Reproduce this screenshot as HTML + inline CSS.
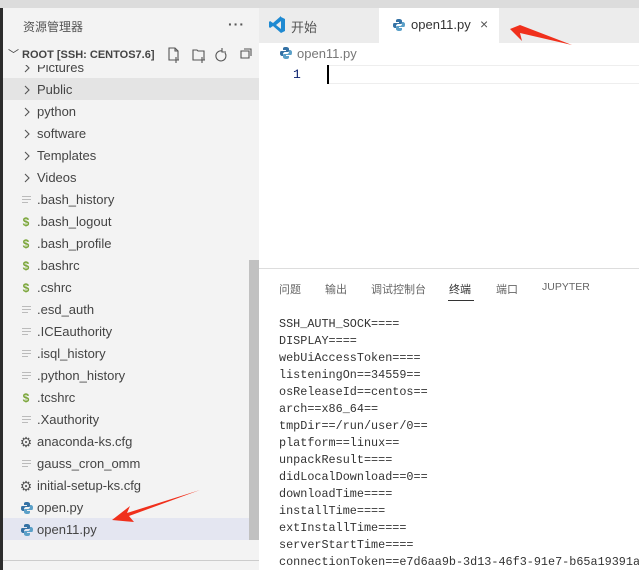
<!DOCTYPE html>
<html><head><meta charset="utf-8"><style>
*{margin:0;padding:0;box-sizing:border-box}
body{width:639px;height:570px;overflow:hidden;background:#fff;font-family:"Liberation Sans","Noto Sans CJK SC",sans-serif;position:relative}
.abs{position:absolute}
.side{left:3px;top:8px;width:256px;height:562px;background:#f3f3f3}
.row{position:absolute;left:0;width:256px;height:22px;font-size:13px;color:#444;line-height:22px;white-space:nowrap}
.row .t{position:absolute;left:34px}
.row .i{position:absolute;left:16px;top:0;width:14px;text-align:center;font-size:12px}
.mono{font-family:"Liberation Mono","DejaVu Sans Mono",monospace;font-size:11.8px;color:#333}
.pt span{position:absolute;white-space:nowrap;top:0}
</style></head><body>
<div class="abs" style="left:0;top:0;width:639px;height:8px;background:#dcdcdc"></div>
<div class="abs" style="left:0;top:8px;width:3px;height:562px;background:#2c2c2c"></div>
<div class="abs side">
 <div class="abs" style="left:20px;top:10px;font-size:12px;color:#555">资源管理器</div>
 <div class="abs" style="left:225px;top:8px;font-size:14px;color:#555;letter-spacing:1px;font-weight:bold">···</div>
 <div class="abs" style="left:0;top:36px;width:256px;height:22px;font-size:11px;font-weight:bold;color:#444;line-height:22px"><span style="margin-left:5px;font-weight:normal">﹀</span> ROOT [SSH: CENTOS7.6]</div>
 <svg class="abs" style="left:163px;top:38px" width="90" height="18" viewBox="0 0 90 18" fill="none" stroke="#555" stroke-width="1.1">
  <path d="M3 2h6l3 3v9H3z M9 2v3h3 M10 11v6 M7 14h6"/>
  <path d="M27 4h4l1 1h6v9H27z M36 11v6 M33 14h6"/>
  <path d="M56 5a5 5 0 1 0 3 2 M56 2v4h4"/>
  <path d="M75 5h8v7h-8z M78 3h7v7"/>
 </svg>
 <div class="abs" style="left:0;top:70px;width:256px;height:22px;background:#e4e4e4"></div>
 <div class="abs" style="left:0;top:510px;width:256px;height:22px;background:#e4e6f1"></div>
 <div class="abs" style="left:246px;top:252px;width:10px;height:280px;background:#c1c1c1"></div>
 <div class="abs" style="left:0;top:552px;width:256px;height:1px;background:#ccc"></div>
</div>
<div id="rows"></div>
<div class="abs" style="left:259px;top:8px;width:380px;height:35px;background:#ececec"></div>
<svg class="abs" style="left:268px;top:16px" width="18" height="18" viewBox="0 0 18 18"><path d="M13 1l4 2v12l-4 2-8-7-3 2-1-1V6l1-1 3 2 8-7zM13 5l-5 4 5 4z" fill="#1f8ad2"/></svg>
<div class="abs" style="left:291px;top:17px;font-size:13px;color:#555">开始</div>
<div class="abs" style="left:379px;top:8px;width:120px;height:35px;background:#fff"></div>
<svg class="abs" style="left:393px;top:19px" width="12" height="12" viewBox="0 0 12 12"><path d="M6 0C3 0 3 1 3 2v1h3v1H1C0 4 0 6 0 7s1 2 2 2h1V7c0-1 1-2 2-2h3c1 0 1-1 1-1V2C9 1 8 0 6 0z" fill="#3572a5"/><path d="M6 12c3 0 3-1 3-2V9H6V8h5c1 0 1-2 1-3s-1-2-2-2H9v2c0 1-1 2-2 2H4C3 7 3 8 3 8v2c0 1 1 2 3 2z" fill="#5ba0c8"/></svg>
<div class="abs" style="left:411px;top:17px;font-size:13px;color:#333">open11.py</div>
<div class="abs" style="left:480px;top:16px;font-size:14px;color:#555">×</div>
<svg class="abs" style="left:280px;top:47px" width="12" height="12" viewBox="0 0 12 12"><path d="M6 0C3 0 3 1 3 2v1h3v1H1C0 4 0 6 0 7s1 2 2 2h1V7c0-1 1-2 2-2h3c1 0 1-1 1-1V2C9 1 8 0 6 0z" fill="#3572a5"/><path d="M6 12c3 0 3-1 3-2V9H6V8h5c1 0 1-2 1-3s-1-2-2-2H9v2c0 1-1 2-2 2H4C3 7 3 8 3 8v2c0 1 1 2 3 2z" fill="#5ba0c8"/></svg>
<div class="abs" style="left:297px;top:46px;font-size:13px;color:#777">open11.py</div>
<div class="abs" style="left:327px;top:65px;width:312px;height:19px;border-top:1px solid #eee;border-bottom:1px solid #eee"></div>
<div class="abs mono" style="left:293px;top:67px;font-size:13px;color:#0b216f">1</div>
<div class="abs" style="left:327px;top:65px;width:2px;height:19px;background:#000"></div>
<div class="abs" style="left:259px;top:268px;width:380px;height:1px;background:#ddd"></div>
<div class="abs pt" style="left:279px;top:281px;width:360px;height:16px;font-size:11px;color:#666">
<span style="left:0">问题</span><span style="left:46px">输出</span><span style="left:92px">调试控制台</span><span style="left:170px;color:#333">终端</span><span style="left:217px">端口</span><span style="left:263px;font-size:10.5px">JUPYTER</span></div>
<div class="abs" style="left:448px;top:300px;width:26px;height:1px;background:#333"></div>
<div class="abs mono" style="left:279px;top:316px;line-height:17px;white-space:pre">SSH_AUTH_SOCK====
DISPLAY====
webUiAccessToken====
listeningOn==34559==
osReleaseId==centos==
arch==x86_64==
tmpDir==/run/user/0==
platform==linux==
unpackResult====
didLocalDownload==0==
downloadTime====
installTime====
extInstallTime====
serverStartTime====
connectionToken==e7d6aa9b-3d13-46f3-91e7-b65a19391a8</div>
<svg class="abs" style="left:0;top:0" width="639" height="570">
<polygon points="510,29 520,25 572,45 520,33 522,41" fill="#f0301c"/>
<polygon points="112,520 130,506 127,513 200,490 129,516 134,522" fill="#f0301c"/>
</svg>
<script>
var items=[["›","Pictures"],["›","Public"],["›","python"],["›","software"],["›","Templates"],["›","Videos"],["≡",".bash_history"],["$",".bash_logout"],["$",".bash_profile"],["$",".bashrc"],["$",".cshrc"],["≡",".esd_auth"],["≡",".ICEauthority"],["≡",".isql_history"],["≡",".python_history"],["$",".tcshrc"],["≡",".Xauthority"],["⚙","anaconda-ks.cfg"],["≡","gauss_cron_omm"],["⚙","initial-setup-ks.cfg"],["py","open.py"],["py","open11.py"]];
var PY='<svg style="position:absolute;left:18px;top:5px" width="12" height="12" viewBox="0 0 12 12"><path d="M6 0C3 0 3 1 3 2v1h3v1H1C0 4 0 6 0 7s1 2 2 2h1V7c0-1 1-2 2-2h3c1 0 1-1 1-1V2C9 1 8 0 6 0z" fill="#3572a5"/><path d="M6 12c3 0 3-1 3-2V9H6V8h5c1 0 1-2 1-3s-1-2-2-2H9v2c0 1-1 2-2 2H4C3 7 3 8 3 8v2c0 1 1 2 3 2z" fill="#5ba0c8"/></svg>';
var LN='<svg style="position:absolute;left:19px;top:6px" width="10" height="10" viewBox="0 0 10 10" stroke="#bbb" stroke-width="1"><path d="M0 1.5h9M0 4.5h9M0 7.5h6"/></svg>';
var CH='<svg style="position:absolute;left:20px;top:6px" width="8" height="10" viewBox="0 0 8 10" fill="none" stroke="#555" stroke-width="1.1"><path d="M2 1l4 4-4 4"/></svg>';
var h="";items.forEach(function(it,k){var y=56+k*22;var ic=it[0],icon;
if(ic=="py")icon=PY;else if(ic=="≡")icon=LN;else if(ic=="›")icon=CH;
else if(ic=="$")icon='<span class="i" style="color:#7ba63a;font-weight:bold">$</span>';
else icon='<span class="i" style="color:#555;font-size:14px">⚙</span>';
h+='<div class="row" style="left:3px;top:'+(y+1)+'px'+(k==0?';clip-path:inset(8px 0 0 0)':'')+'">'+icon+'<span class="t">'+it[1]+'</span></div>';});
document.getElementById("rows").innerHTML=h;
</script>
</body></html>
